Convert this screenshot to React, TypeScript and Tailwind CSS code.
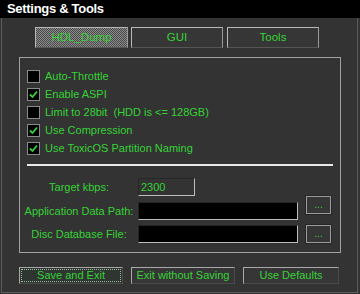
import React from "react";

const green = "text-[#36d236]";

function Check({ checked }: { checked: boolean }) {
  return (
    <span className="flex h-[13px] w-[13px] shrink-0 items-center justify-center border border-[#8a8a8a] bg-black">
      {checked && (
        <svg width="9" height="9" viewBox="0 0 9 9">
          <path d="M1 4.5 L3.5 7 L8 1.5" stroke="#36d236" strokeWidth="1.8" fill="none" />
        </svg>
      )}
    </span>
  );
}

const options = [
  { label: "Auto-Throttle", checked: false },
  { label: "Enable ASPI", checked: true },
  { label: "Limit to 28bit  (HDD is <= 128GB)", checked: false },
  { label: "Use Compression", checked: true },
  { label: "Use ToxicOS Partition Naming", checked: true },
];

function Tab({ label, active, w }: { label: string; active?: boolean; w: string }) {
  return (
    <div
      className={`flex h-[21px] items-center justify-center border border-t-[#b8b8b8] border-l-[#b8b8b8] border-r-[#9a9a9a] border-b-[#555] text-[11.5px] ${green} ${w} ${
        active
          ? "bg-[repeating-conic-gradient(#8a8a8a_0_25%,#4a4a4a_0_50%)] bg-[length:2px_2px]"
          : "bg-[#363636]"
      }`}
    >
      {label}
    </div>
  );
}

function Btn({ label, w, focus }: { label: string; w: string; focus?: boolean }) {
  return (
    <div
      className={`flex h-[17px] border border-t-[#a8a8a8] border-l-[#a8a8a8] border-r-[#4a4a4a] border-b-[#4a4a4a] ${
        focus ? "bg-[#2f3631] p-[1px]" : "bg-[#363636]"
      } ${w}`}
    >
      <div
        className={`flex flex-1 items-center justify-center text-[11px] ${green} ${
          focus ? "border border-dotted border-[#9ab89a]" : ""
        }`}
      >
        {label}
      </div>
    </div>
  );
}

function Dots({ className = "" }: { className?: string }) {
  return (
    <div
      className={`flex h-[18px] w-[25px] items-center justify-center border border-[#9a9a9a] bg-[#363636] shadow-[0_0_0_1px_#262626] text-[10px] leading-none ${green} ${className}`}
    >
      ...
    </div>
  );
}

export default function App() {
  return (
    <div
      className="flex h-[294px] w-[360px] flex-col bg-[#333333]"
      style={{ fontFamily: '"Liberation Sans", Arial, sans-serif' }}
    >
      <div className="flex h-[18px] items-center bg-black pl-[7px] text-[13px] font-bold tracking-[-0.3px] text-white">
        Settings &amp; Tools
      </div>
      <div className="ml-[1px] flex h-[275px] w-[357px] flex-col border-x border-b border-[#5c5c5c]">
        <div className="mt-[9px] flex pl-[33px]">
          <Tab label="HDL_Dump" active w="w-[93px]" />
          <div className="w-[3px]" />
          <Tab label="GUI" w="w-[92px]" />
          <div className="w-[4px]" />
          <Tab label="Tools" w="w-[92px]" />
        </div>

        <div className="ml-[17px] mt-[9px] flex h-[196px] w-[322px] flex-col border border-[#a0a0a0] text-[11px]">
          <div className="mt-[12px] flex flex-col gap-[5px] pl-[7px]">
            {options.map((o) => (
              <div key={o.label} className="flex h-[13px] items-center gap-[5px]">
                <Check checked={o.checked} />
                <span className={`whitespace-pre ${green}`}>{o.label}</span>
              </div>
            ))}
          </div>

          <div className="mx-[7px] mt-[9px] h-[2px] bg-[#e8e8e8]" />

          <div className="mt-[12px] flex h-[18px] items-center">
            <span className={`w-[118px] text-center ${green}`}>Target kbps:</span>
            <div className={`flex h-[18px] w-[57px] items-center border border-t-[#262626] border-l-[#262626] border-r-[#bdbdbd] border-b-[#bdbdbd] pl-[2px] ${green}`}>
              2300
            </div>
          </div>

          <div className="mt-[6px] flex h-[18px] items-center">
            <span className={`w-[118px] text-center ${green}`}>Application Data Path:</span>
            <div className="h-[18px] w-[160px] border border-t-[#262626] border-l-[#262626] border-r-[#bdbdbd] border-b-[#bdbdbd] bg-black" />
            <Dots className="ml-[8px] -mt-[13px]" />
          </div>

          <div className="mt-[5px] flex h-[18px] items-center">
            <span className={`w-[118px] text-center ${green}`}>Disc Database File:</span>
            <div className="h-[18px] w-[160px] border border-t-[#262626] border-l-[#262626] border-r-[#bdbdbd] border-b-[#bdbdbd] bg-black" />
            <Dots className="ml-[8px] -mt-[1px]" />
          </div>
        </div>

        <div className="ml-[17px] mt-[14px] flex gap-[8px]">
          <Btn label="Save and Exit" w="w-[104px]" focus />
          <Btn label="Exit without Saving" w="w-[104px]" />
          <Btn label="Use Defaults" w="w-[96px]" />
        </div>
      </div>
    </div>
  );
}
